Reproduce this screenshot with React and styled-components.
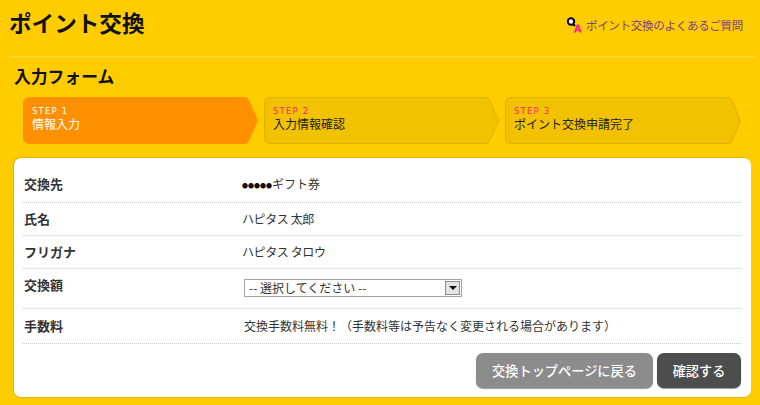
import React from "react";
import styled, { createGlobalStyle } from "styled-components";

const GlobalStyle = createGlobalStyle`
  html, body {
    margin: 0;
    background: #ffcc00;
  }
  body {
    font-family: "Noto Sans CJK JP", "Liberation Sans", sans-serif;
    color: #222;
  }
`;

const Page = styled.div`
  width: 760px;
  height: 405px;
  overflow: hidden;
  background: #ffcc00;
`;

const Header = styled.header`
  display: flex;
  justify-content: space-between;
  align-items: flex-start;
  height: 56px;
  margin: 0 5px 0 9px;
  border-bottom: 2px solid #ffd52e;
`;

const Title = styled.h1`
  margin: 6px 0 0;
  font-size: 22.6px;
  line-height: 33px;
  font-weight: 700;
  color: #111;
`;

const FaqLink = styled.a`
  display: flex;
  align-items: center;
  gap: 4px;
  margin: 16px 12px 0 0;
  font-size: 11.5px;
  line-height: 18px;
  letter-spacing: -0.28px;
  color: #7a3f8c;
  text-decoration: none;
`;

const FormTitle = styled.h2`
  margin: 6px 0 0 14px;
  font-size: 16.8px;
  line-height: 25px;
  font-weight: 700;
  color: #111;
`;

const Steps = styled.ol`
  display: grid;
  grid-template-columns: 235px 235px 236px;
  column-gap: 6px;
  height: 47px;
  margin: 8px 0 0 23px;
  padding: 0;
  list-style: none;
`;

const StepItem = styled.li`
  position: relative;
  padding: 10px 0 0 9px;
  color: ${(p) => (p.$active ? "#fff" : "#222")};
`;

const StepShape = styled.svg`
  position: absolute;
  inset: 0;
  width: 100%;
  height: 100%;
`;

const StepNo = styled.span`
  position: relative;
  display: block;
  font-family: "DejaVu Sans", sans-serif;
  font-size: 8.5px;
  line-height: 9px;
  letter-spacing: 0.14em;
  color: ${(p) => (p.$active ? "#fff" : "#ff2a6d")};
`;

const StepName = styled.span`
  position: relative;
  display: block;
  font-size: 12px;
  line-height: 15px;
`;

const Card = styled.section`
  width: 737px;
  height: 239px;
  box-sizing: border-box;
  margin: 14px 0 0 14px;
  padding: 9px 10px 0 9px;
  background: #fff;
  border-radius: 7px;
  box-shadow: -1px -1px 0 #e0b400, 0 1px 0 #e0b400;
`;

const Row = styled.div`
  display: grid;
  grid-template-columns: 219px 1fr;
  height: ${(p) => p.$height}px;
  box-sizing: border-box;
  padding-top: ${(p) => p.$top}px;
  border-bottom: 1px dotted #ccc;
  font-size: 12px;
  line-height: 18px;
`;

const Label = styled.div`
  padding-left: 1px;
  font-size: 13px;
  font-weight: 700;
  color: #333;
`;

const Value = styled.div`
  color: #333;
  padding-left: ${(p) => p.$indent || 0}px;
  letter-spacing: ${(p) => (p.$tight ? "-0.4px" : "0")};
`;

const Masked = styled.span`
  font-size: 6px;
  vertical-align: 1px;
  color: #111;
`;

const SelectBox = styled.div`
  display: flex;
  justify-content: space-between;
  align-items: center;
  width: 218px;
  height: 18px;
  box-sizing: border-box;
  margin: 3px 0 0 2px;
  padding: 0 1px 0 4px;
  border: 1px solid #a5a5a5;
  font-size: 12px;
  color: #333;
  background: #fff;
`;

const SelectArrow = styled.span`
  display: flex;
  align-items: center;
  justify-content: center;
  width: 15px;
  height: 14px;
  background: #e4e4e4;
  border: 1px solid #8c8c8c;
  box-sizing: border-box;
  &::after {
    content: "";
    border-top: 4px solid #111;
    border-left: 4px solid transparent;
    border-right: 4px solid transparent;
  }
`;

const Actions = styled.div`
  display: flex;
  justify-content: flex-end;
  gap: 4px;
  margin-top: 9px;
`;

const Button = styled.button`
  height: 35px;
  width: ${(p) => p.$width}px;
  padding: 0;
  border: 0;
  border-radius: 7px;
  font-family: inherit;
  font-size: 13.2px;
  font-weight: 500;
  color: #fff;
  background: ${(p) => (p.$primary ? "#4d4d4d" : "#8c8c8c")};
  box-shadow: 0 1px 1px #999;
`;

function FaqIcon() {
  return (
    <svg width="15" height="16" viewBox="0 0 15 16">
      <circle cx="4" cy="4.5" r="3.2" fill="#fff" stroke="#000" strokeWidth="2" />
      <path d="M6 7l2 2" stroke="#000" strokeWidth="2" />
      <path d="M6.8 15.5l3-8h2l3 8h-2.2l-.5-1.7h-2.6l-.5 1.7zM10 12.2h1.6l-.8-2.6z" fill="#ff1f8f" fillRule="evenodd" />
    </svg>
  );
}

const StepBody =
  "M6 .5H222a4 4 0 0 1 3.6 2.4L234.5 23.5 225.6 44a4 4 0 0 1-3.6 2.5H6a5.5 5.5 0 0 1-5.5-5.5V6A5.5 5.5 0 0 1 6 .5z";

function Step({ no, name, active }) {
  return (
    <StepItem $active={active}>
      <StepShape viewBox="0 0 235 47" preserveAspectRatio="none">
        <path d={StepBody} fill={active ? "#ff9100" : "#f2c200"} stroke={active ? "#ff9100" : "#dfb000"} />
      </StepShape>
      <StepNo $active={active}>STEP {no}</StepNo>
      <StepName>{name}</StepName>
    </StepItem>
  );
}

const steps = [
  { no: 1, name: "情報入力", active: true },
  { no: 2, name: "入力情報確認" },
  { no: 3, name: "ポイント交換申請完了" },
];

export default function App() {
  return (
    <Page>
      <GlobalStyle />
      <Header>
        <Title>ポイント交換</Title>
        <FaqLink href="#">
          <FaqIcon />
          ポイント交換のよくあるご質問
        </FaqLink>
      </Header>
      <FormTitle>入力フォーム</FormTitle>
      <Steps>
        {steps.map((s) => (
          <Step key={s.no} {...s} />
        ))}
      </Steps>
      <Card>
        <Row $height={36} $top={8}>
          <Label>交換先</Label>
          <Value><Masked>●●●●●</Masked>ギフト券</Value>
        </Row>
        <Row $height={33} $top={7}>
          <Label>氏名</Label>
          <Value $tight>ハピタス 太郎</Value>
        </Row>
        <Row $height={33} $top={7}>
          <Label>フリガナ</Label>
          <Value $tight>ハピタス タロウ</Value>
        </Row>
        <Row $height={40} $top={7}>
          <Label>交換額</Label>
          <SelectBox>
            -- 選択してください --
            <SelectArrow />
          </SelectBox>
        </Row>
        <Row $height={35} $top={8}>
          <Label>手数料</Label>
          <Value $indent={2}>交換手数料無料！（手数料等は予告なく変更される場合があります）</Value>
        </Row>
        <Actions>
          <Button $width={177}>交換トップページに戻る</Button>
          <Button $width={84} $primary>確認する</Button>
        </Actions>
      </Card>
    </Page>
  );
}
